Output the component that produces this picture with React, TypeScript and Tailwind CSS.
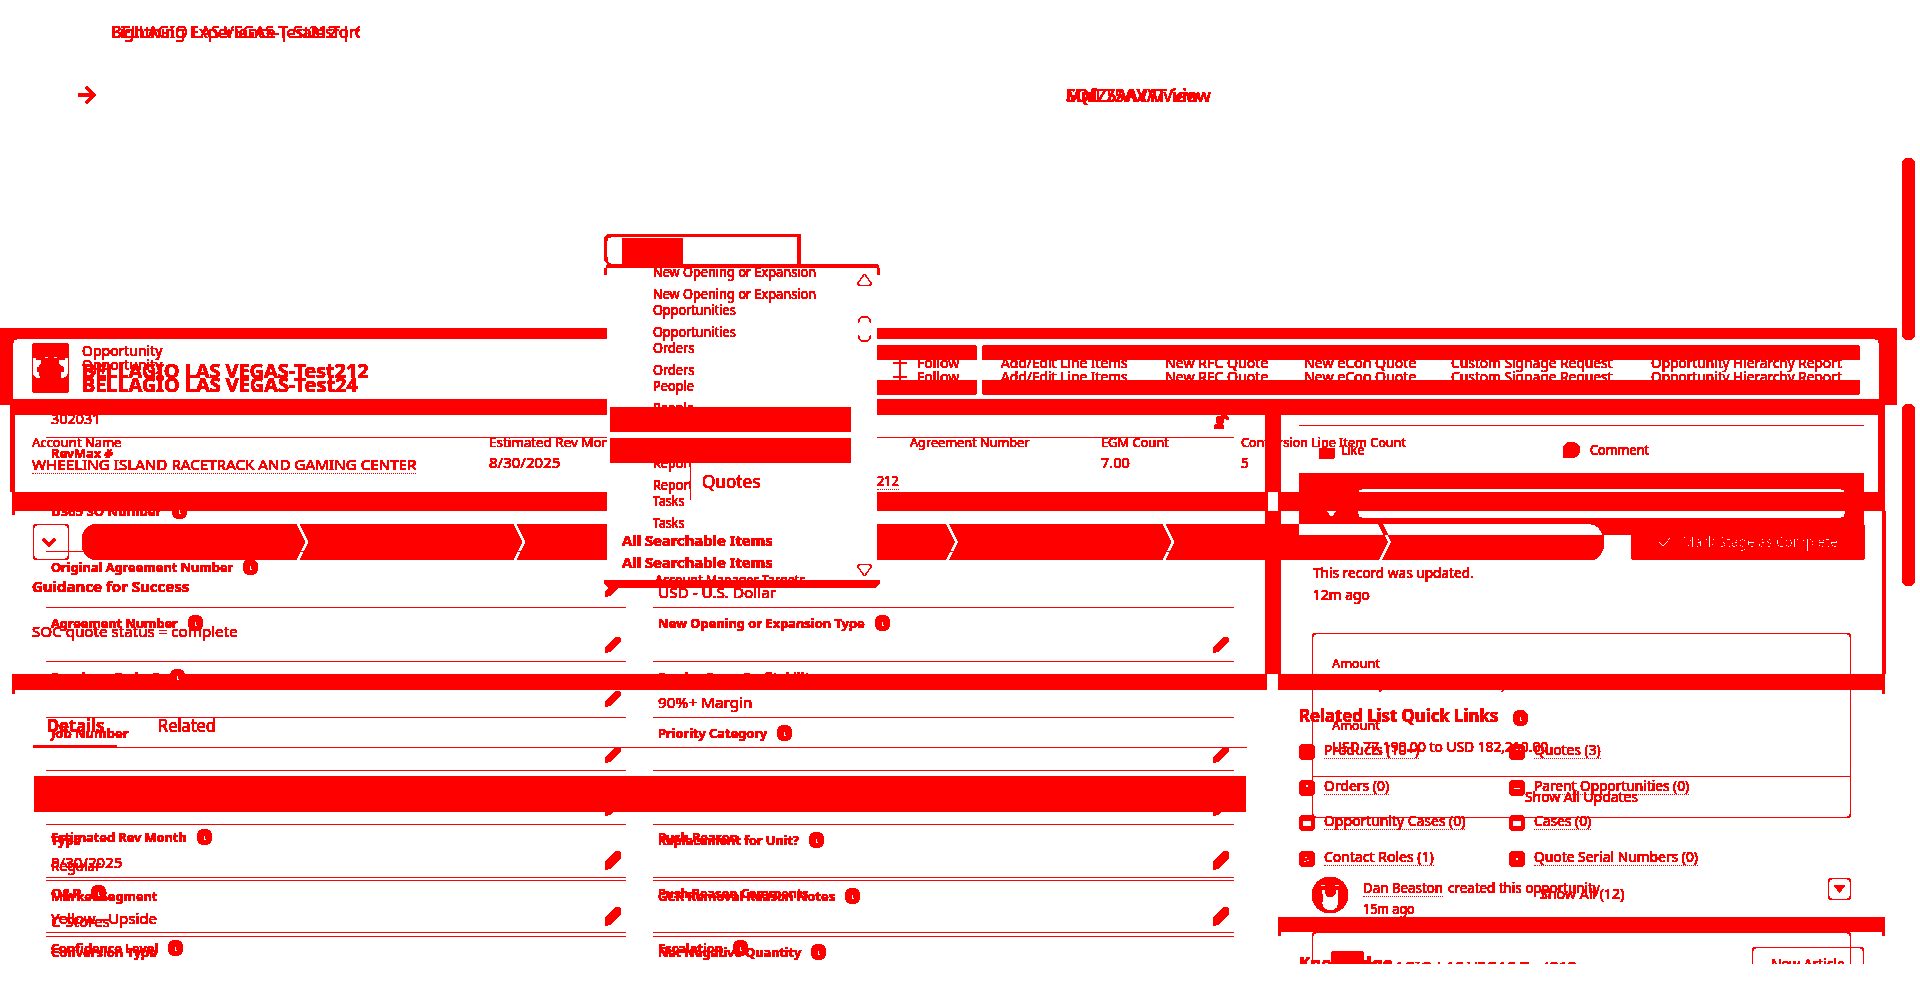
import React, { useLayoutEffect, useRef, useState } from "react";

type TextProps = { w: number; children: string; className?: string };

/** One line of text, condensed or widened to occupy exactly `w` pixels. */
function T({ w, children, className = "text-[15px]" }: TextProps) {
  const ref = useRef<HTMLSpanElement>(null);
  const [scale, setScale] = useState(1);
  useLayoutEffect(() => {
    if (ref.current && ref.current.offsetWidth) setScale(w / ref.current.offsetWidth);
  }, [w, children]);
  return (
    <span className={"block h-5 shrink-0 leading-5 " + className} style={{ width: w }}>
      <span ref={ref} className="inline-block origin-left whitespace-nowrap" style={{ transform: `scaleX(${scale})` }}>
        {children}
      </span>
    </span>
  );
}

const LABEL = "text-[13px] font-bold";

function Info() {
  return (
    <svg width="15" height="16" viewBox="0 0 15 16" className="shrink-0">
      <ellipse cx="7.5" cy="8" rx="7.5" ry="8" fill="currentColor" />
      <path d="M7 6.5v3.5h2" stroke="#fff" strokeWidth="1" fill="none" shapeRendering="crispEdges" />
    </svg>
  );
}

function Pencil() {
  return (
    <svg width="16" height="16" viewBox="0 0 16 16" className="shrink-0">
      <path d="M0 11.5L9.5 1.5Q12-.8 14.5.8Q16.6 3 14.5 5.5L5 14.5L0 16Z" fill="currentColor" />
    </svg>
  );
}

function UserEdit() {
  return (
    <svg width="15" height="17" viewBox="0 0 15 17" className="shrink-0">
      <circle cx="6" cy="7" r="3.8" fill="currentColor" />
      <path d="M0 16v-3q2-2.5 5-2.5t5 2.5v3zM6.500 0h3l5 4.500v2h-2l-5-4z" fill="currentColor" />
    </svg>
  );
}

type Field = { label?: string; lw?: number; info?: boolean; value?: string; vw?: number; edit?: boolean; user?: boolean };

function FieldRow({ f, className }: { f: Field; className: string }) {
  return (
    <div className={"flex shrink-0 justify-between border-b border-[#f00] pl-[5px] pr-[5px] " + className}>
      <div className="flex flex-col pt-[5px]">
        <div className="flex h-5 items-center gap-[10px]">
          {f.label && <T w={f.lw!} className={LABEL}>{f.label}</T>}
          {f.info && <Info />}
        </div>
        {f.value && <div className="mt-[5px]"><T w={f.vw!}>{f.value}</T></div>}
      </div>
      <div className="pt-[29px]">
        {f.edit && <Pencil />}
        {f.user && <div className="pt-[6px]"><UserEdit /></div>}
      </div>
    </div>
  );
}

const rowHeights = [
  "h-[60px]", "h-[58px]", "h-[56px]", "h-[56px]", "h-[54px]",
  "h-[56px]", "h-[53px]", "h-[54px]", "h-[56px]", "h-[56px]", "h-[56px]",
];
const recordLeft: Field[] = [
  { value: "302031", vw: 49 },
  { label: "RevMax #", lw: 62 },
  { label: "D365 SO Number", lw: 111, info: true },
  { label: "Original Agreement Number", lw: 182, info: true, edit: true },
  { label: "Agreement Number", lw: 127, info: true, edit: true },
  { label: "Previous Order?", lw: 109, info: true, edit: true },
  { label: "Job Number", lw: 78, edit: true },
  { edit: true },
  { label: "Type", lw: 30, value: "Regular", vw: 50, edit: true },
  { label: "Market Segment", lw: 106, value: "C-Stores", vw: 59, edit: true },
  { label: "Conversion Type", lw: 106 },
];
const recordRight: Field[] = [
  { user: true },
  {},
  {},
  { value: "USD - U.S. Dollar", vw: 118 },
  { label: "New Opening or Expansion Type", lw: 207, info: true, edit: true },
  { label: "Service Comp Profitability", lw: 159, value: "90%+ Margin", vw: 95 },
  { label: "Priority Category", lw: 109, info: true, edit: true },
  { edit: true },
  { label: "Replacement for Unit?", lw: 141, info: true, edit: true },
  { label: "GCR Removal Reason Notes", lw: 177, info: true, edit: true },
  { label: "Net Negative Quantity", lw: 143, info: true },
];
const forecastHeights = ["h-[56px]", "h-[55px]", "h-[56px]"];
const forecastLeft: Field[] = [
  { label: "Estimated Rev Month", lw: 136, info: true, value: "8/30/2025", vw: 71, edit: true },
  { label: "O&P", lw: 30, info: true, value: "Yellow - Upside", vw: 106, edit: true },
  { label: "Confidence Level", lw: 107, info: true },
];
const forecastRight: Field[] = [
  { label: "Push Reason", lw: 80, edit: true },
  { label: "Push Reason Comments", lw: 151, edit: true },
  { label: "Escalation", lw: 65, info: true },
];

function FieldColumns({ left, right, heights }: { left: Field[]; right: Field[]; heights: string[] }) {
  return (
    <div className="ml-[46px] flex gap-[27px]">
      <div className="flex w-[580px] flex-col">
        {left.map((f, i) => <FieldRow key={i} f={f} className={heights[i]} />)}
      </div>
      <div className="flex w-[581px] flex-col">
        {right.map((f, i) => <FieldRow key={i} f={f} className={heights[i]} />)}
      </div>
    </div>
  );
}

function Layer({ children, className = "" }: { children: React.ReactNode; className?: string }) {
  return <div className={"isolate flex h-[964px] w-[1920px] flex-col overflow-hidden [grid-area:1/1] " + className}>{children}</div>;
}

/** Several lines drawn in the same place. */
function Overlap({ children }: { children: React.ReactNode }) {
  return <div className="grid [&>*]:[grid-area:1/1]">{children}</div>;
}

function BrowserChrome() {
  return (
    <Layer>
      <div className="ml-[111px] mt-[22px] w-[249px] overflow-hidden">
        <Overlap>
          <T w={254} className="text-[16px]">BELLAGIO LAS VEGAS-Test212 | C</T>
          <T w={252} className="text-[16px]">Lightning Experience | Salesforc</T>
        </Overlap>
      </div>
      <div className="ml-[78px] mt-[43px] flex items-center gap-[970px]">
        <svg width="18" height="20" viewBox="0 0 18 20">
          <path d="M0 10h16M8 2l8 8l-8 8" fill="none" stroke="currentColor" strokeWidth="2.500" />
        </svg>
        <Overlap>
          <T w={145} className="text-[18px] font-medium">SQfL75AXAT/view</T>
          <T w={133} className="text-[18px] font-medium">MnIZ5AAVY/view</T>
        </Overlap>
      </div>
      <div className="ml-[1902px] mt-[53px] flex flex-col gap-[64px]">
        <div className="h-[182px] w-[13px] rounded-full bg-[#f00]" />
        <div className="h-[182px] w-[13px] rounded-full bg-[#f00]" />
      </div>
    </Layer>
  );
}

function Frames() {
  return (
    <Layer>
      <div className="mt-[328px] h-[77px] w-[1897px] shrink-0 rounded-br-[3px] bg-[#f00] pb-[6px] pl-[13px] pr-[18px] pt-[11px]">
        <div className="h-full rounded-t-[4px] bg-white" />
      </div>
      <div className="ml-[10px] flex h-[87px] w-[1875px] shrink-0 border-l-[5px] border-r-[7px] border-t-[10px] border-[#f00]">
        <div className="w-[1250px]" />
        <div className="w-[16px] bg-[#f00]" />
      </div>
      <div className="ml-[12px] flex h-[19px] w-[1873px] shrink-0 gap-[10px]">
        <div className="w-[1256px] bg-[#f00]" />
        <div className="flex-1 bg-[#f00]" />
      </div>
      <div className="ml-[12px] flex h-[163px] w-[1874px] shrink-0 justify-between">
        <div className="h-[4px] w-[3px] rounded-br-full bg-[#f00]" />
        <div className="ml-[1250px] mr-auto w-[16px] bg-[#f00]" />
        <div className="w-[4px] bg-[#f00]" />
      </div>
      <div className="ml-[12px] flex h-[16px] w-[1873px] shrink-0 gap-[11px]">
        <div className="w-[1255px] bg-[#f00]" />
        <div className="flex-1 bg-[#f00]" />
      </div>
      <div className="ml-[12px] flex h-[227px] w-[1873px] shrink-0">
        <div className="h-[4px] w-[3px] rounded-br-full bg-[#f00]" />
        <div className="ml-auto h-[4px] w-[3px] rounded-bl-full bg-[#f00]" />
      </div>
      <div className="ml-[1278px] h-[15px] w-[607px] shrink-0 bg-[#f00]" />
      <div className="ml-[1278px] flex h-[4px] w-[607px] shrink-0 justify-between">
        <div className="w-[3px] rounded-br-full bg-[#f00]" />
        <div className="w-[3px] rounded-bl-full bg-[#f00]" />
      </div>
    </Layer>
  );
}

const actions = [
  { text: "Add/Edit Line Items", w: 127, cell: "w-[163px] pl-[19px]" },
  { text: "New RFC Quote", w: 103, cell: "w-[140px] pl-[20px]" },
  { text: "New eCon Quote", w: 112, cell: "w-[148px] pl-[19px]" },
  { text: "Custom Signage Request", w: 162, cell: "w-[198px] pl-[18px]" },
  { text: "Opportunity Hierarchy Report", w: 191, cell: "w-[229px] pl-[20px]" },
];

function HeaderCopy({ second = false }: { second?: boolean }) {
  return (
    <Layer>
      <div className={"ml-[82px] flex shrink-0 flex-col " + (second ? "mt-[354px]" : "mt-[340px]")}>
        <T w={80}>Opportunity</T>
        <div className="mt-px">
          {second
            ? <T w={276} className="text-[19px] font-bold">BELLAGIO LAS VEGAS-Test24</T>
            : <T w={287} className="text-[19px] font-bold">BELLAGIO LAS VEGAS-Test212</T>}
        </div>
      </div>
    </Layer>
  );
}

function ActionText() {
  return (
    <div className="flex">
      <div className="flex w-[105px] gap-[10px] pl-[16px]">
        <svg width="14" height="20" viewBox="0 0 14 20"><path d="M0 10h14M7 3v16" stroke="currentColor" strokeWidth="2" /></svg>
        <T w={42} className="text-[14px]">Follow</T>
      </div>
      {actions.map((a) => <div key={a.text} className={a.cell}><T w={a.w} className="text-[14px]">{a.text}</T></div>)}
    </div>
  );
}

function HeaderActions() {
  return (
    <Layer>
      <div className="ml-[877px] mt-[345px] flex h-[15px] shrink-0 gap-[5px]">
        <div className="w-[100px] rounded-tr-[4px] bg-[#f00]" />
        <div className="w-[878px] rounded-t-[4px] bg-[#f00]" />
      </div>
      <div className="ml-[877px] h-[20px] shrink-0 overflow-hidden">
        <div className="-mt-[7px] h-[14px]"><ActionText /></div>
        <ActionText />
      </div>
      <div className="ml-[877px] flex h-[15px] shrink-0 gap-[5px]">
        <div className="w-[100px] rounded-br-[4px] bg-[#f00]" />
        <div className="w-[878px] rounded-b-[4px] bg-[#f00]" />
      </div>
    </Layer>
  );
}

function OpportunityIcon() {
  return (
    <Layer>
      <svg width="37" height="50" viewBox="0 0 37 50" className="ml-[32px] mt-[343px] shrink-0">
        <rect width="37" height="50" rx="4" fill="currentColor" />
        <path d="M.7 15L4 14L5 17H9V21L7 24L5 25V29H7L8.500 35H4Q1 34 .7 30ZM36.300 15L33 14L32 17H27V21L29 23L32 25V29H29L28 35H32Q36 34 36.300 30ZM13 14h3v1h-3zM22 14h3v1h-3z" fill="#fff" />
      </svg>
    </Layer>
  );
}

function DottedLink({ w, children, className }: TextProps) {
  return <div className="h-5 w-fit shrink-0 border-b border-dotted border-[#f00]"><T w={w} className={className}>{children}</T></div>;
}

const stageEdges = [214, 431, 647.5, 863.5, 1080, 1296.5];
function stagePath() {
  let d = `M16 0A17 18 0 0 0 16 36H${stageEdges[0]}l9-18l-9-18Z`;
  stageEdges.forEach((e, i) => {
    const s = e + 4;
    const next = stageEdges[i + 1];
    d += `M${s} 0l9 18l-9 18` + (next ? `H${next}l9-18l-9-18Z` : "H1508A14 18 0 0 0 1508 0Z");
  });
  return d + "M1217 0H1782V11H1217Z";
}

const links = [
  { l: "Products (10+)", lw: 95, r: "Quotes (3)", rw: 67, gap: "h-[36px]" },
  { l: "Orders (0)", lw: 65, r: "Parent Opportunities (0)", rw: 155, gap: "h-[35px]" },
  { l: "Opportunity Cases (0)", lw: 141, r: "Cases (0)", rw: 57, gap: "h-[36px]" },
  { l: "Contact Roles (1)", lw: 110, r: "Quote Serial Numbers (0)", rw: 164, gap: "h-[36px]" },
];
const glyphs = [
  [null, <path key="a" d="M7 5h2v1h-2zM11 5h1v1h-1z" fill="#fff" />],
  [<rect key="b" x="7" y="5" width="2" height="2" fill="#fff" />, <rect key="c" x="5" y="8" width="6" height="1" fill="#fff" />],
  [<rect key="d" x="4" y="6" width="8" height="5" fill="#fff" />, <rect key="e" x="4" y="6" width="8" height="5" fill="#fff" />],
  [<path key="f" d="M6 6h2v1h-2zM5 10h2v1h-2zM8 9h2v1h-2z" fill="#fff" />, <circle key="g" cx="8" cy="8" r="2" fill="#fff" />],
];

function LinkIcon({ children }: { children: React.ReactNode }) {
  return (
    <svg width="16" height="16" viewBox="0 0 16 16" className="mt-[5px] shrink-0">
      <rect width="16" height="16" rx="5" fill="currentColor" />
      {children}
    </svg>
  );
}

function Highlights() {
  return (
    <Layer>
      <div className="ml-[32px] mt-[432px] flex h-[92px] shrink-0">
        <div className="w-[457px]">
          <T w={89} className="text-[13px]">Account Name</T>
          <div className="mt-[2px]"><DottedLink w={384}>WHEELING ISLAND RACETRACK AND GAMING CENTER</DottedLink></div>
        </div>
        <div className="w-[421px]"><T w={134} className="text-[13px]">Estimated Rev Month</T><T w={71}>8/30/2025</T>
          <div className="ml-[388px] -mt-[2px]"><DottedLink w={22}>212</DottedLink></div>
        </div>
        <div className="w-[191px]"><T w={119} className="text-[13px]">Agreement Number</T></div>
        <div className="w-[140px]"><T w={68} className="text-[13px]">EGM Count</T><T w={29}>7.00</T></div>
        <div><T w={165} className="text-[13px]">Conversion Line Item Count</T><T w={8}>5</T></div>
      </div>
      <div className="ml-[33px] flex h-[36px] shrink-0">
        <div className="flex w-[36px] items-center justify-center rounded-[4px] border border-[#f00]">
          <svg width="16" height="9" viewBox="0 0 14 9" className="mr-[4px]"><path d="M1 1l6 6l6-6" fill="none" stroke="currentColor" strokeWidth="2" /></svg>
        </div>
        <svg width="1783" height="36" viewBox="0 0 1783 36" className="ml-[13px]"><path d={stagePath()} fillRule="evenodd" fill="currentColor" /></svg>
      </div>
      <div className="ml-[32px] mt-[16px] shrink-0"><T w={157} className="text-[15px] font-bold">Guidance for Success</T></div>
      <div className="ml-[32px] mt-[25px] shrink-0"><T w={206}>SOC quote status = complete</T></div>
      <div className="ml-[33px] mt-[74px] flex h-[33px] w-[1214px] shrink-0 border-b border-[#f00]">
        <div className="h-[33px] w-[84px] border-b-[3px] border-[#f00] pl-[14px]"><T w={57} className="text-[18px] font-bold">Details</T></div>
        <div className="pl-[41px]"><T w={58} className="text-[18px]">Related</T></div>
      </div>
      <div className="ml-[34px] mt-[28px] h-[36px] w-[1212px] shrink-0 rounded-[3px] bg-[#f00]" />
      <div className="mt-[10px]"><FieldColumns left={forecastLeft} right={forecastRight} heights={forecastHeights} /></div>
    </Layer>
  );
}

function StageButton() {
  return (
    <Layer>
      <div className="ml-[1631px] mt-[524px] flex h-[36px] w-[234px] shrink-0 items-center rounded-[4px] bg-[#f00] pl-[27px] text-white">
        <svg width="13" height="10" viewBox="0 0 13 10"><path d="M.5 4.500l4.500 5l7.500-9" fill="none" stroke="#fff" strokeWidth="1.600" /></svg>
        <div className="ml-[11px]"><T w={156} className="text-[14px]">Mark Stage as Complete</T></div>
      </div>
    </Layer>
  );
}

function QuickLinks() {
  return (
    <Layer>
      <div className="ml-[1299px] mt-[704px] flex shrink-0 items-center gap-[15px]">
        <T w={199} className="text-[18px] font-bold">Related List Quick Links</T>
        <div className="pt-[6px]"><Info /></div>
      </div>
      <div className="ml-[1299px] mt-[13px] flex shrink-0 flex-col">
        {links.map((r, i) => (
          <div key={r.l} className={"flex " + r.gap}>
            <div className="flex w-[210px] gap-[9px]"><LinkIcon>{glyphs[i][0]}</LinkIcon><DottedLink w={r.lw}>{r.l}</DottedLink></div>
            <div className="flex gap-[9px]"><LinkIcon>{glyphs[i][1]}</LinkIcon><DottedLink w={r.rw}>{r.r}</DottedLink></div>
          </div>
        ))}
      </div>
      <div className="ml-[1540px] shrink-0 pt-[2px]"><T w={84} className="text-[14px]">Show All (12)</T></div>
      <div className="ml-[1299px] mt-[43px] flex w-[565px] shrink-0 justify-between">
        <div className="pt-[6px]"><T w={94} className="text-[18px] font-bold">Knowledge</T></div>
        <div className="h-[40px] w-[112px] rounded-[4px] border border-[#f00] pl-[18px] pt-[5px]"><T w={74} className="text-[15px]">New Article</T></div>
      </div>
    </Layer>
  );
}

function Feed() {
  return (
    <Layer>
      <div className="ml-[1299px] mt-[425px] flex w-[565px] shrink-0 border-t border-[#f00] pt-[14px]">
        <div className="flex w-[264px] gap-[6px] pl-[20px]">
          <svg width="16" height="20" viewBox="0 0 16 20"><path d="M0 9l3-1l2-2h3v2h7q1 0 1 2v7q-1 2-3 2H5l-2-1l-3 1z" fill="currentColor" /></svg>
          <T w={23} className="text-[14px]">Like</T>
        </div>
        <div className="flex gap-[9px]">
          <svg width="18" height="20" viewBox="0 0 18 20"><path d="M9 2a9 8 0 1 1-4 15.500L0 18l1-4A9 8 0 0 1 9 2z" fill="currentColor" /></svg>
          <T w={59} className="text-[14px]">Comment</T>
        </div>
      </div>
      <div className="ml-[1299px] mt-[13px] h-[51px] w-[565px] shrink-0 bg-[#f00] pl-[60px] pr-[19px] pt-[16px]">
        <div className="-ml-[1px] h-[29px] rounded-[4px] bg-white pt-[3px]"><div className="h-[19px] bg-[#f00]" /></div>
        <svg width="11" height="5" viewBox="0 0 11 5" className="-ml-[33px] -mt-[7px]"><path d="M0 0h11L7 5H4z" fill="#fff" /></svg>
      </div>
      <div className="ml-[1313px] mt-[38px] shrink-0">
        <T w={161} className="text-[15px]">This record was updated.</T>
        <div className="mt-[2px]"><T w={57} className="text-[15px]">12m ago</T></div>
      </div>
      <div className="ml-[1312px] mt-[29px] flex h-[185px] w-[539px] shrink-0 flex-col rounded-[4px] border border-[#f00] text-[14px]">
        <div className="h-[143px] border-b border-[#f00] pl-[19px] pt-[19px]">
          <T w={48} className="text-[13px]">Amount</T>
          <div className="mt-[1px]"><T w={216}>USD 77,190.00 to USD 182,210.00</T></div>
          <div className="mt-[21px]"><T w={48} className="text-[13px]">Amount</T></div>
          <div className="mt-[1px]"><T w={216}>USD 77,190.00 to USD 182,210.00</T></div>
        </div>
        <div className="pl-[212px] pt-[10px]"><T w={113} className="text-[14px]">Show All Updates</T></div>
      </div>
      <div className="ml-[1312px] mt-[59px] flex w-[539px] shrink-0">
        <svg width="36" height="36" viewBox="0 0 36 36" className="shrink-0">
          <circle cx="18" cy="18" r="18" fill="currentColor" />
          <path d="M10 12L13 13Q13 19 18 20Q24 19 24 13L27 12Q27 16 26 20Q27 27 25 31Q22 34 18 34Q13 33 11 30Q9 26 11 20Q9 16 10 12ZM9 7.500l4 .5v1.500h-4zM23 9.500v-1.500l5-.5l-1 2z" fill="#fff" />
        </svg>
        <div className="ml-[15px]">
          <div className="flex">
            <DottedLink w={80}>Dan Beaston</DottedLink>
            <div className="ml-[5px]"><T w={155}>created this opportunity.</T></div>
          </div>
          <div className="mt-[2px]"><T w={52} className="text-[14px]">15m ago</T></div>
        </div>
        <div className="ml-auto mt-px flex h-[22px] w-[23px] items-center justify-center rounded-[4px] border border-[#f00]">
          <svg width="11" height="8" viewBox="0 0 11 8"><path d="M0 0h11L5.500 8z" fill="currentColor" /></svg>
        </div>
      </div>
      <div className="ml-[1312px] mt-[13px] flex h-[60px] w-[539px] shrink-0 rounded-[4px] border border-[#f00] pl-[18px] pt-[18px]">
        <div className="h-[30px] w-[33px] rounded-t-[4px] bg-[#f00]" />
        <div className="mt-[5px] -ml-[5px]"><T w={218} className="text-[15px]">BELLAGIO LAS VEGAS-Test212</T></div>
      </div>
    </Layer>
  );
}

const menuItems = [
  { text: "New Opening or Expansion", w: 163, gap: "h-[38px]" },
  { text: "Opportunities", w: 83, gap: "h-[38px]" },
  { text: "Orders", w: 41, gap: "h-[38px]" },
  { text: "People", w: 41, gap: "h-[77px]" },
  { text: "Reports", w: 46, gap: "h-[38px]" },
  { text: "Tasks", w: 31, gap: "h-[39px]" },
];

function MenuCopy({ className }: { className: string }) {
  return (
    <div className={"flex flex-col pl-[15px] " + className}>
      {menuItems.map((m) => <div key={m.text} className={"shrink-0 pl-[31px] " + m.gap}><T w={m.w} className="text-[14px]">{m.text}</T></div>)}
      <T w={151} className="text-[15px] font-bold">All Searchable Items</T>
      <div className="ml-[33px] mt-[20px]"><T w={150} className="text-[14px]">Account Manager Targets</T></div>
    </div>
  );
}

function SearchMenu() {
  return (
    <Layer>
      <div className="ml-[604px] mt-[234px] h-[30px] w-[197px] shrink-0 rounded-l-[7px] border-l-[3px] border-r-[4px] border-t-[3px] border-[#f00] pl-[15px] pt-px">
        <div className="h-[26px] w-[61px] bg-[#f00]" />
      </div>
      <div className="ml-[606px] h-[4px] w-[273px] shrink-0 rounded-t-[4px] bg-[#f00]" />
      <div className="ml-[604px] flex h-[312px] w-[276px] shrink-0">
        <div className="h-[7px] w-[3px] rounded-bl-full bg-[#f00]" />
        <div className="grid h-[312px] w-[270px] shrink-0 overflow-hidden bg-white [&>*]:[grid-area:1/1]">
          <MenuCopy className="-mt-[6px]" />
          <MenuCopy className="mt-[16px]" />
          <div className="isolate ml-[3px] mt-[139px] flex h-[93px] w-[241px] flex-col">
            <div className="h-[25px] rounded-b-[2px] bg-[#f00]" />
            <div className="h-[6px] bg-white" />
            <div className="h-[25px] rounded-t-[2px] bg-[#f00]" />
            <div className="ml-[80px] h-[37px] border-l border-[#f00] bg-white pl-[11px] pt-[8px]"><T w={58} className="text-[18px]">Quotes</T></div>
          </div>
          <svg width="15" height="304" viewBox="0 0 15 304" className="ml-[250px] mt-[5px]" fill="none" stroke="currentColor" strokeWidth="1">
            <path d="M7.500 1L1 10Q.5 12.500 3 12.500H12Q14.500 12.500 14 10Z" />
            <path d="M1.500 50C1.500 41.500 13.500 41.500 13.500 50M1.500 62C1.500 70.500 13.500 70.500 13.500 62" />
            <path d="M7.500 303L1 294Q.5 291.500 3 291.500H12Q14.500 291.500 14 294Z" />
          </svg>
        </div>
        <div className="h-[7px] w-[3px] rounded-br-full bg-[#f00]" />
      </div>
      <div className="ml-[604px] h-[8px] w-[276px] shrink-0 rounded-b-[8px] bg-[#f00]" />
    </Layer>
  );
}

export default function App() {
  return (
    <div className="h-[1008px] w-[1920px] overflow-hidden bg-white font-['Noto_Sans','Open_Sans',sans-serif] text-[#f00] [filter:url(#two-tone)]">
      <svg width="0" height="0" className="absolute">
        <filter id="two-tone" x="0" y="0" width="100%" height="100%" colorInterpolationFilters="sRGB">
          <feComponentTransfer>
            <feFuncG type="discrete" tableValues="0 0 0 0 0 0 0 0 0 0 0 0 0 0 0 0 0 0 0 1" />
            <feFuncB type="discrete" tableValues="0 0 0 0 0 0 0 0 0 0 0 0 0 0 0 0 0 0 0 1" />
          </feComponentTransfer>
        </filter>
      </svg>
      <div className="grid">
        <Frames />
        <BrowserChrome />
        <Layer>
          <div className="mt-[378px]"><FieldColumns left={recordLeft} right={recordRight} heights={rowHeights} /></div>
        </Layer>
        <Feed />
        <Highlights />
        <QuickLinks />
        <StageButton />
        <HeaderCopy />
        <HeaderCopy second />
        <HeaderActions />
        <OpportunityIcon />
        <SearchMenu />
      </div>
    </div>
  );
}
